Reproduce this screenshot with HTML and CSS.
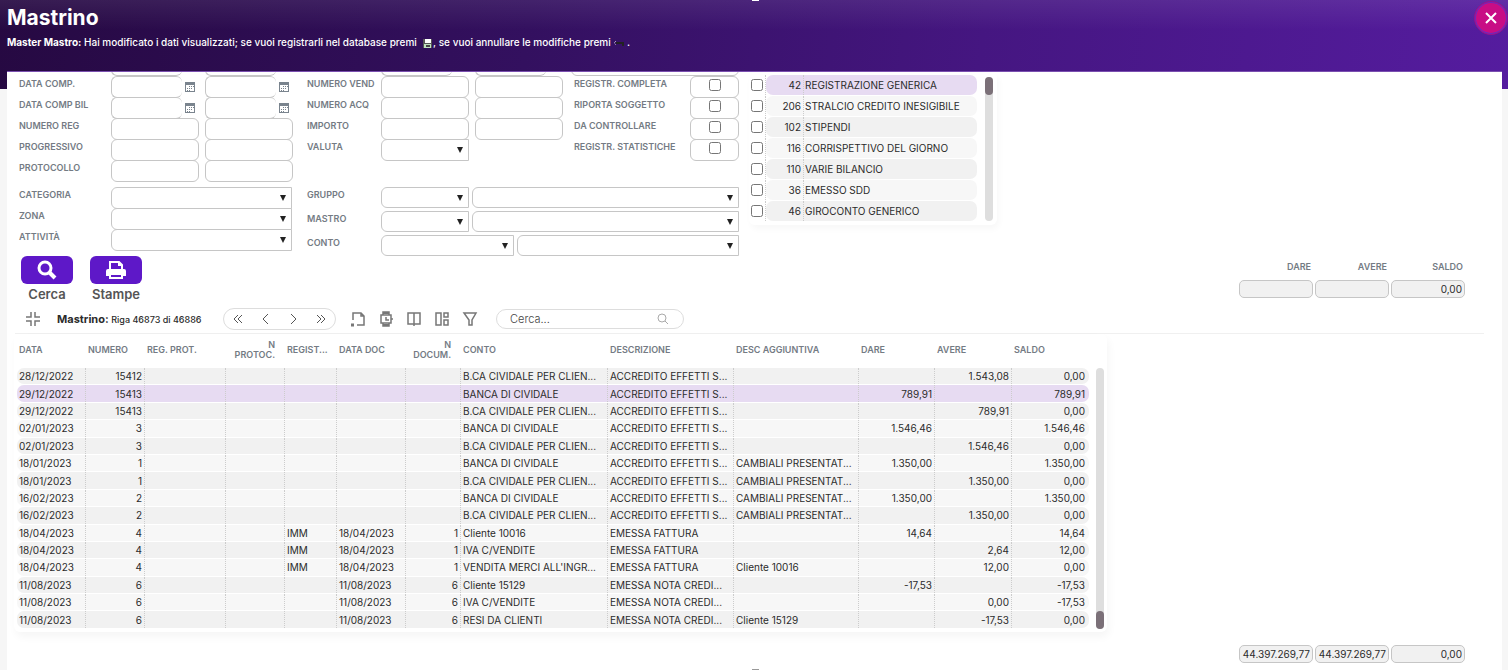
FILE: index.html
```html
<!DOCTYPE html>
<html lang="it">
<head>
    <meta charset="UTF-8">
    <meta name="viewport" content="width=device-width, initial-scale=1.0">
    <title>Mastrino</title>
    <link rel="stylesheet" href="styles.css">
</head>
<body>
    <svg class="sprite" aria-hidden="true">
        <symbol id="calendar" viewBox="0 0 12 12">
            <path fill="#7a848e" d="M1 1h10v10H1z"/>
            <path fill="#fff" d="M2 4h8v6H2z"/>
            <path fill="#7a848e" d="M5 5h1v1H5zM7 5h1v1H7zM9 5h1v1H9zM3 7h1v1H3zM5 7h1v1H5zM7 7h1v1H7zM3 9h1v1H3zM5 9h1v1H5z"/>
        </symbol>
    </svg>

    <span class="handle handle-top"></span>
    <span class="handle handle-bottom"></span>

    <header class="page-header">
        <div>
            <h1 class="page-title">Mastrino</h1>
            <p class="message"><b>Master Mastro:</b> Hai modificato i dati visualizzati; se vuoi registrarli nel database premi
                <svg class="inline-icon save-icon" viewBox="0 0 9 9"><path fill="#555" d="M0 0h9v9H0z"/><path fill="#fff" d="M2 0h6v4H2z"/><path fill="#bfe0bf" d="M1 5h7v4H1z"/><path fill="#444" d="M3 6h4v2H3z"/></svg>
                , se vuoi annullare le modifiche premi
                <svg class="inline-icon undo-icon" viewBox="0 0 11 9"><path fill="none" stroke="#222" stroke-width="2" d="M3 4h7v3"/><path fill="none" stroke="#ddd" stroke-dasharray="1 1" d="M3 2L1 4l2 2"/></svg>
                .</p>
        </div>
        <button type="button" class="close-btn" aria-label="Chiudi">
            <svg viewBox="0 0 12 12" width="12" height="12"><path d="M1 1l10 10M11 1L1 11" stroke="#fff" stroke-width="2"/></svg>
        </button>
    </header>

    <main class="panel">
        <div class="top">
            <form class="filters">
                <!-- bottom edge of the row that is scrolled out -->
                <div class="cut-row cut-dates"><i class="cut short"></i><i class="cut short"></i></div>
                <div class="cut-row cut-dates"><i class="cut short"></i><i class="cut short"></i></div>
                <div class="cut-row cut-wide"><i class="cut"></i></div>

                <div class="group">
                    <div class="field-row">
                        <label for="dataComp">DATA COMP.</label>
                        <span class="date"><input type="text" id="dataComp"><button type="button" aria-label="Calendario"><svg><use href="#calendar"/></svg></button></span>
                        <span class="date"><input type="text" aria-label="Data comp. a"><button type="button" aria-label="Calendario"><svg><use href="#calendar"/></svg></button></span>
                    </div>
                    <div class="field-row">
                        <label for="dataCompBil">DATA COMP BIL</label>
                        <span class="date"><input type="text" id="dataCompBil"><button type="button" aria-label="Calendario"><svg><use href="#calendar"/></svg></button></span>
                        <span class="date"><input type="text" aria-label="Data comp bil a"><button type="button" aria-label="Calendario"><svg><use href="#calendar"/></svg></button></span>
                    </div>
                    <div class="field-row">
                        <label for="numeroReg">NUMERO REG</label>
                        <input type="text" class="box" id="numeroReg">
                        <input type="text" class="box" aria-label="Numero reg a">
                    </div>
                    <div class="field-row">
                        <label for="progressivo">PROGRESSIVO</label>
                        <input type="text" class="box" id="progressivo">
                        <input type="text" class="box" aria-label="Progressivo a">
                    </div>
                    <div class="field-row">
                        <label for="protocollo">PROTOCOLLO</label>
                        <input type="text" class="box" id="protocollo">
                        <input type="text" class="box" aria-label="Protocollo a">
                    </div>
                </div>

                <div class="group group-middle">
                    <div class="field-row">
                        <label for="numeroVend">NUMERO VEND</label>
                        <input type="text" class="box" id="numeroVend">
                        <input type="text" class="box" aria-label="Numero vend a">
                    </div>
                    <div class="field-row">
                        <label for="numeroAcq">NUMERO ACQ</label>
                        <input type="text" class="box" id="numeroAcq">
                        <input type="text" class="box" aria-label="Numero acq a">
                    </div>
                    <div class="field-row">
                        <label for="importo">IMPORTO</label>
                        <input type="text" class="box" id="importo">
                        <input type="text" class="box" aria-label="Importo a">
                    </div>
                    <div class="field-row">
                        <label for="valuta">VALUTA</label>
                        <select class="box" id="valuta"><option></option></select>
                    </div>
                </div>

                <div class="group group-checks">
                    <div class="field-row">
                        <label for="completa">REGISTR. COMPLETA</label>
                        <span class="check-box"><input type="checkbox" id="completa"></span>
                    </div>
                    <div class="field-row">
                        <label for="riporta">RIPORTA SOGGETTO</label>
                        <span class="check-box"><input type="checkbox" id="riporta"></span>
                    </div>
                    <div class="field-row">
                        <label for="controllare">DA CONTROLLARE</label>
                        <span class="check-box"><input type="checkbox" id="controllare"></span>
                    </div>
                    <div class="field-row">
                        <label for="statistiche">REGISTR. STATISTICHE</label>
                        <span class="check-box"><input type="checkbox" id="statistiche"></span>
                    </div>
                </div>

                <div class="group">
                    <div class="field-row">
                        <label for="categoria">CATEGORIA</label>
                        <select class="fill" id="categoria"><option></option></select>
                    </div>
                    <div class="field-row">
                        <label for="zona">ZONA</label>
                        <select class="fill" id="zona"><option></option></select>
                    </div>
                    <div class="field-row">
                        <label for="attivita">ATTIVITÀ</label>
                        <select class="fill" id="attivita"><option></option></select>
                    </div>
                </div>

                <div class="group group-accounts">
                    <div class="field-row">
                        <label for="gruppo">GRUPPO</label>
                        <select class="box" id="gruppo"><option></option></select>
                        <select class="fill" aria-label="Descrizione gruppo"><option></option></select>
                    </div>
                    <div class="field-row">
                        <label for="mastro">MASTRO</label>
                        <select class="box" id="mastro"><option></option></select>
                        <select class="fill" aria-label="Descrizione mastro"><option></option></select>
                    </div>
                    <div class="field-row">
                        <label for="conto">CONTO</label>
                        <select class="box-wide" id="conto"><option></option></select>
                        <select class="fill" aria-label="Descrizione conto"><option></option></select>
                    </div>
                </div>
            </form>

            <div class="causali">
                <table class="causali-table">
                    <tbody>
                        <tr class="selected"><td><input type="checkbox" aria-label="Registrazione generica"></td><td class="num">42</td><td>REGISTRAZIONE GENERICA</td></tr>
                        <tr><td><input type="checkbox" aria-label="Stralcio credito inesigibile"></td><td class="num">206</td><td>STRALCIO CREDITO INESIGIBILE</td></tr>
                        <tr><td><input type="checkbox" aria-label="Stipendi"></td><td class="num">102</td><td>STIPENDI</td></tr>
                        <tr><td><input type="checkbox" aria-label="Corrispettivo del giorno"></td><td class="num">116</td><td>CORRISPETTIVO DEL GIORNO</td></tr>
                        <tr><td><input type="checkbox" aria-label="Varie bilancio"></td><td class="num">110</td><td>VARIE BILANCIO</td></tr>
                        <tr><td><input type="checkbox" aria-label="Emesso SDD"></td><td class="num">36</td><td>EMESSO SDD</td></tr>
                        <tr><td><input type="checkbox" aria-label="Giroconto generico"></td><td class="num">46</td><td>GIROCONTO GENERICO</td></tr>
                    </tbody>
                </table>
                <div class="scrollbar"><span class="thumb"></span></div>
            </div>
        </div>

        <div class="actions">
            <button type="button" class="action">
                <span class="action-icon"><svg viewBox="0 0 20 20" width="20" height="20" fill="none" stroke="#fff"><circle cx="8" cy="8" r="6" stroke-width="3"/><path d="M12 12l6 6" stroke-width="4"/></svg></span>
                Cerca
            </button>
            <button type="button" class="action">
                <span class="action-icon"><svg viewBox="0 0 20 20" width="20" height="20"><path fill="none" stroke="#fff" stroke-width="2" d="M4 10V2h9l3 3v5"/><path fill="#fff" d="M12 1v5h5z"/><path fill="#fff" d="M2 9h16a2 2 0 0 1 2 2v5h-4v-2H4v2H0v-5a2 2 0 0 1 2-2z"/><path fill="#5e18c8" stroke="#fff" stroke-width="2" d="M4 14h12v4H4z"/></svg></span>
                Stampe
            </button>
            <div class="totals">
                <label>DARE<input type="text" readonly></label>
                <label>AVERE<input type="text" readonly></label>
                <label>SALDO<input type="text" value="0,00" readonly></label>
            </div>
        </div>

        <div class="toolbar">
            <button type="button" class="tool collapse" aria-label="Comprimi"><svg viewBox="0 0 16 16"><path d="M6 1v5H1M10 1v5h5M6 15v-5H1M10 15v-5h5"/></svg></button>
            <h2 class="grid-title">Mastrino: <span>Riga 46873 di 46886</span></h2>
            <div class="pager">
                <button type="button" aria-label="Prima"><svg viewBox="0 0 12 12"><path d="M6 2L2 6l4 4M10 2L6 6l4 4"/></svg></button>
                <button type="button" aria-label="Precedente"><svg viewBox="0 0 12 12"><path d="M8 1L3 6l5 5"/></svg></button>
                <button type="button" aria-label="Successiva"><svg viewBox="0 0 12 12"><path d="M4 1l5 5-5 5"/></svg></button>
                <button type="button" aria-label="Ultima"><svg viewBox="0 0 12 12"><path d="M2 2l4 4-4 4M6 2l4 4-4 4"/></svg></button>
            </div>
            <div class="tools">
                <button type="button" class="tool" aria-label="Esporta"><svg viewBox="0 0 16 16"><path d="M3 9V2h8l3 3v9H7M11 2v3h3"/><path d="M1 14h3" stroke-width="3"/></svg></button>
                <button type="button" class="tool" aria-label="Storico"><svg viewBox="0 0 16 16"><path d="M5 4V1h6v3M5 12v3h6v-3M3 4h10v8H3zM13 8h2M8 6v3h3"/><path d="M5 2h6M5 14h6" stroke-width="2"/></svg></button>
                <button type="button" class="tool" aria-label="Dettaglio"><svg viewBox="0 0 16 16"><path d="M2 2h12v11H2zM8 2v13"/></svg></button>
                <button type="button" class="tool" aria-label="Layout"><svg viewBox="0 0 16 16"><path d="M2 2h5v12H2zM10 2h4v4h-4zM10 9h4v5h-4z"/></svg></button>
                <button type="button" class="tool" aria-label="Filtro"><svg viewBox="0 0 16 16"><path d="M2 2h12L10 9v5H7V9z"/></svg></button>
            </div>
            <div class="search">
                <input type="text" placeholder="Cerca..." aria-label="Cerca">
                <svg viewBox="0 0 12 12" width="12" height="12"><circle cx="5" cy="5" r="4"/><path d="M8 8l3 3"/></svg>
            </div>
        </div>

        <div class="grid-card">
            <table class="grid">
                <colgroup>
                    <col class="w69"><col class="w59"><col class="w81"><col class="w59"><col class="w52"><col class="w69"><col class="w55">
                    <col class="w147"><col class="w126"><col class="w125"><col class="w76"><col class="w77"><col class="w77">
                </colgroup>
                <thead>
                    <tr><th>DATA</th><th>NUMERO</th><th>REG. PROT.</th><th class="num">N PROTOC.</th><th>REGIST...</th><th>DATA DOC</th><th class="num">N DOCUM.</th><th>CONTO</th><th>DESCRIZIONE</th><th>DESC AGGIUNTIVA</th><th>DARE</th><th>AVERE</th><th>SALDO</th></tr>
                </thead>
                <tbody>
                    <tr><td>28/12/2022</td><td>15412</td><td></td><td></td><td></td><td></td><td></td><td>B.CA CIVIDALE PER CLIEN...</td><td>ACCREDITO EFFETTI S...</td><td></td><td></td><td>1.543,08</td><td>0,00</td></tr>
                    <tr class="selected"><td>29/12/2022</td><td>15413</td><td></td><td></td><td></td><td></td><td></td><td>BANCA DI CIVIDALE</td><td>ACCREDITO EFFETTI S...</td><td></td><td>789,91</td><td></td><td>789,91</td></tr>
                    <tr><td>29/12/2022</td><td>15413</td><td></td><td></td><td></td><td></td><td></td><td>B.CA CIVIDALE PER CLIEN...</td><td>ACCREDITO EFFETTI S...</td><td></td><td></td><td>789,91</td><td>0,00</td></tr>
                    <tr><td>02/01/2023</td><td>3</td><td></td><td></td><td></td><td></td><td></td><td>BANCA DI CIVIDALE</td><td>ACCREDITO EFFETTI S...</td><td></td><td>1.546,46</td><td></td><td>1.546,46</td></tr>
                    <tr><td>02/01/2023</td><td>3</td><td></td><td></td><td></td><td></td><td></td><td>B.CA CIVIDALE PER CLIEN...</td><td>ACCREDITO EFFETTI S...</td><td></td><td></td><td>1.546,46</td><td>0,00</td></tr>
                    <tr><td>18/01/2023</td><td>1</td><td></td><td></td><td></td><td></td><td></td><td>BANCA DI CIVIDALE</td><td>ACCREDITO EFFETTI S...</td><td>CAMBIALI PRESENTAT...</td><td>1.350,00</td><td></td><td>1.350,00</td></tr>
                    <tr><td>18/01/2023</td><td>1</td><td></td><td></td><td></td><td></td><td></td><td>B.CA CIVIDALE PER CLIEN...</td><td>ACCREDITO EFFETTI S...</td><td>CAMBIALI PRESENTAT...</td><td></td><td>1.350,00</td><td>0,00</td></tr>
                    <tr><td>16/02/2023</td><td>2</td><td></td><td></td><td></td><td></td><td></td><td>BANCA DI CIVIDALE</td><td>ACCREDITO EFFETTI S...</td><td>CAMBIALI PRESENTAT...</td><td>1.350,00</td><td></td><td>1.350,00</td></tr>
                    <tr><td>16/02/2023</td><td>2</td><td></td><td></td><td></td><td></td><td></td><td>B.CA CIVIDALE PER CLIEN...</td><td>ACCREDITO EFFETTI S...</td><td>CAMBIALI PRESENTAT...</td><td></td><td>1.350,00</td><td>0,00</td></tr>
                    <tr><td>18/04/2023</td><td>4</td><td></td><td></td><td>IMM</td><td>18/04/2023</td><td>1</td><td>Cliente 10016</td><td>EMESSA FATTURA</td><td></td><td>14,64</td><td></td><td>14,64</td></tr>
                    <tr><td>18/04/2023</td><td>4</td><td></td><td></td><td>IMM</td><td>18/04/2023</td><td>1</td><td>IVA C/VENDITE</td><td>EMESSA FATTURA</td><td></td><td></td><td>2,64</td><td>12,00</td></tr>
                    <tr><td>18/04/2023</td><td>4</td><td></td><td></td><td>IMM</td><td>18/04/2023</td><td>1</td><td>VENDITA MERCI ALL'INGR...</td><td>EMESSA FATTURA</td><td>Cliente 10016</td><td></td><td>12,00</td><td>0,00</td></tr>
                    <tr><td>11/08/2023</td><td>6</td><td></td><td></td><td></td><td>11/08/2023</td><td>6</td><td>Cliente 15129</td><td>EMESSA NOTA CREDI...</td><td></td><td>-17,53</td><td></td><td>-17,53</td></tr>
                    <tr><td>11/08/2023</td><td>6</td><td></td><td></td><td></td><td>11/08/2023</td><td>6</td><td>IVA C/VENDITE</td><td>EMESSA NOTA CREDI...</td><td></td><td></td><td>0,00</td><td>-17,53</td></tr>
                    <tr><td>11/08/2023</td><td>6</td><td></td><td></td><td></td><td>11/08/2023</td><td>6</td><td>RESI DA CLIENTI</td><td>EMESSA NOTA CREDI...</td><td>Cliente 15129</td><td></td><td>-17,53</td><td>0,00</td></tr>
                </tbody>
            </table>
            <div class="scrollbar grid-scrollbar"><span class="thumb"></span></div>
        </div>

        <div class="totals totals-bottom">
            <input type="text" value="44.397.269,77" aria-label="Totale dare" readonly>
            <input type="text" value="44.397.269,77" aria-label="Totale avere" readonly>
            <input type="text" value="0,00" aria-label="Totale saldo" readonly>
        </div>
    </main>
</body>
</html>
```
FILE: styles.css
```css
* {
    margin: 0;
    padding: 0;
    box-sizing: border-box;
}

body {
    font-family: Inter, Arial, sans-serif;
    font-size: 10px;
    color: #2b2b2b;
    background-color: #f6f6f6;
    background-image: linear-gradient(rgba(255, 255, 255, 0.08), rgba(255, 255, 255, 0) 30px), linear-gradient(97deg, #260942, #33105f 35%, #451681 65%, #551c9f);
    background-size: 100% 89px;
    background-repeat: no-repeat;
    min-height: 100vh;
    display: flex;
    flex-direction: column;
}

button {
    font-family: inherit;
    background: none;
    border: none;
    cursor: pointer;
}

.sprite {
    position: absolute;
    width: 0;
    height: 0;
}

/* Window resize handles */
.handle {
    position: absolute;
    left: 50%;
    width: 7px;
    height: 1px;
    margin-left: -2px;
    background: #fff;
}

.handle-bottom {
    bottom: 0;
    background: #999;
}

/* Header */
.page-header {
    height: 71px;
    padding-left: 7px;
    display: flex;
    justify-content: space-between;
    align-items: flex-start;
    color: #fff;
}

.page-title {
    font-size: 21px;
    line-height: 24px;
    font-weight: 700;
    padding-top: 6px;
}

.message {
    font-weight: 500;
    line-height: 14px;
    padding-top: 5px;
}

.inline-icon {
    height: 9px;
    vertical-align: -2px;
}

.save-icon {
    width: 9px;
    margin: 0 -2px 0 4px;
}

.undo-icon {
    width: 11px;
}

.close-btn {
    width: 34px;
    height: 34px;
    margin-top: 1px;
    display: flex;
    justify-content: center;
    align-items: center;
    border-radius: 50%;
    background: #c80d85;
    border: 1px solid #93148f;
    box-shadow: inset 0 0 0 1px #6a2bc0;
}

/* Main panel */
.panel {
    flex: 1;
    margin: 0 6px 0 7px;
    background: #fff;
    border-top: 1px solid #7a4fb0;
}

.top {
    display: flex;
    align-items: flex-start;
    gap: 10px;
    padding-left: 12px;
}

.filters {
    display: grid;
    grid-template-columns: 277px 256px 165px;
    column-gap: 11px;
}

.cut-row {
    height: 4px;
    overflow: hidden;
    display: flex;
    align-items: flex-end;
    gap: 6px;
    padding-left: 92px;
}

.cut-row + .cut-row {
    padding-left: 74px;
}

.cut-row.cut-wide {
    padding-left: 0;
    margin-left: -3px;
}

.cut {
    flex: 1;
    height: 22px;
    border: 1px solid #c6c6c6;
    border-radius: 6px;
}

.cut.short {
    flex: none;
    width: 71px;
    border-right: none;
    margin-right: 17px;
}

.group {
    margin-bottom: 5px;
}

.field-row {
    display: flex;
    align-items: flex-start;
    gap: 6px;
    margin-bottom: -1px;
}

.field-row:last-child {
    margin-bottom: 0;
}

label {
    font-size: 9px;
    line-height: 15px;
    font-weight: 600;
    color: #747b84;
    white-space: nowrap;
}

.field-row label {
    width: 86px;
}

.group-middle label,
.group-accounts label {
    width: 68px;
}

.field-row input[type="text"],
.field-row select,
.check-box {
    height: 22px;
    border: 1px solid #c6c6c6;
    border-radius: 6px;
    background-color: #fff;
    font: inherit;
}

.field-row .box {
    width: 88px;
}

.box-wide {
    width: 133px;
}

.fill {
    flex: 1;
    min-width: 0;
}

.group .field-row:has(.fill) {
    padding-right: 4px;
}

.group-accounts .field-row.field-row {
    padding-right: 0;
}

.field-row select {
    appearance: none;
    border-radius: 6px 0 0 6px;
    background: #fff url("data:image/svg+xml,%3Csvg xmlns='http://www.w3.org/2000/svg' width='6' height='6'%3E%3Cpath d='M0 0h6L3 6z' fill='%23222'/%3E%3C/svg%3E") no-repeat right 5px center;
}

.date {
    display: flex;
    width: 88px;
}

.date input {
    width: 71px;
    border-right: none !important;
}

.date button {
    width: 17px;
    height: 22px;
    padding-right: 2px;
    display: flex;
    justify-content: center;
    align-items: center;
}

.date svg {
    display: block;
    flex: none;
    width: 12px;
    height: 12px;
}

.group-checks .field-row {
    justify-content: space-between;
}

.check-box {
    width: 49px;
    display: flex;
    justify-content: center;
    padding-top: 2px;
}

input[type="checkbox"] {
    width: 12px;
    height: 12px;
}

.group-accounts {
    grid-column: span 2;
    margin-bottom: 0;
}

.group-accounts .field-row {
    gap: 3px;
    margin-bottom: 3px;
}

.group-accounts .field-row:last-child {
    margin-bottom: 0;
}

.group-accounts .field-row select {
    height: 21px;
}

.group-accounts label {
    width: 71px;
}

/* Causali list */
.causali {
    display: flex;
    gap: 8px;
    padding: 3px 4px 3px 0;
    border-radius: 6px;
    box-shadow: 2px 4px 6px rgba(0, 0, 0, 0.03);
}

.causali-table {
    border-spacing: 0 1px;
    margin-top: -1px;
}

.causali-table td {
    height: 20px;
    line-height: 20px;
    white-space: nowrap;
    padding-left: 1px;
    background: #f1f1f1;
}

.causali-table tr:nth-child(even) td {
    background: #f7f7f7;
}

.causali-table tr td:first-child {
    width: 17px;
    padding-left: 2px;
    background: none;
    border-right: 1px dotted #ccc;
}

.causali-table input {
    display: block;
}

.causali-table .num {
    width: 38px;
    padding-right: 2px;
    text-align: right;
    border-right: 1px dotted #ccc;
    border-radius: 7px 0 0 7px;
}

.causali-table td:last-child {
    width: 173px;
    border-radius: 0 7px 7px 0;
}

.causali-table tr.selected td:not(:first-child) {
    background: #e7dbf2;
}

.scrollbar {
    width: 8px;
    margin: 2px 0 1px;
    border-radius: 4px;
    background: #dedede;
    display: flex;
    align-items: flex-start;
}

.thumb {
    width: 8px;
    height: 18px;
    border-radius: 4px;
    background: #7b7078;
}

/* Action buttons and totals */
.actions {
    display: flex;
    gap: 17px;
    padding: 0 37px 0 14px;
}

.action {
    width: 52px;
    display: flex;
    flex-direction: column;
    align-items: center;
    font-size: 13px;
    line-height: 20px;
    font-weight: 600;
    color: #555;
}

.action-icon {
    width: 52px;
    height: 28px;
    border-radius: 6px;
    background: #5e18c8;
    display: flex;
    justify-content: center;
    align-items: center;
}

.totals {
    display: flex;
    gap: 2px;
    margin-left: auto;
    padding-top: 3px;
}

.totals label {
    width: 74px;
    padding-right: 2px;
    text-align: right;
}

.totals input {
    width: 74px;
    height: 18px;
    padding: 0 2px;
    border: 1px solid #c6c6c6;
    border-radius: 5px;
    background: #f1f1f1;
    font: 10px Inter, Arial, sans-serif;
    color: #2b2b2b;
    text-align: right;
}

.totals label input {
    display: block;
    margin-top: 6px;
}

.totals-bottom {
    justify-content: flex-end;
    padding: 13px 37px 7px 0;
}

/* Toolbar */
.toolbar {
    display: flex;
    align-items: center;
    height: 29px;
    margin: 1px 18px 0 8px;
    padding-left: 10px;
    border-bottom: 1px solid #f0f0f0;
}

.toolbar svg {
    display: block;
    fill: none;
    stroke: #777;
}

.tool svg {
    width: 16px;
    height: 16px;
    stroke-width: 1.5;
}

.grid-title {
    font-size: 11px;
    line-height: 16px;
    font-weight: 700;
    margin-left: 16px;
    width: 166px;
    white-space: nowrap;
}

.grid-title span {
    font-size: 9px;
    font-weight: 500;
}

.pager {
    display: flex;
    justify-content: space-around;
    width: 113px;
    height: 22px;
    border: 1px solid #ddd;
    border-radius: 11px;
}

.pager svg {
    width: 12px;
    height: 12px;
    stroke: #555;
}

.tools {
    display: flex;
    gap: 12px;
    margin-left: 14px;
}

.search {
    display: flex;
    align-items: center;
    width: 188px;
    height: 20px;
    margin-left: 18px;
    padding: 0 14px 0 13px;
    border: 1px solid #ddd;
    border-radius: 10px;
}

.search input {
    flex: 1;
    min-width: 0;
    border: none;
    outline: none;
    font: 300 11px Inter, Arial, sans-serif;
}

.search input::placeholder {
    color: #444;
}

.search svg {
    stroke: #aaa;
}

/* Ledger grid */
.grid-card {
    display: flex;
    gap: 7px;
    width: fit-content;
    margin-left: 7px;
    padding: 0 3px 3px;
    border-radius: 6px;
    box-shadow: 2px 5px 8px rgba(0, 0, 0, 0.04);
}

.grid {
    width: 1072px;
    height: 295px;
    table-layout: fixed;
    border-spacing: 0 1px;
}

.w52 { width: 52px; }
.w55 { width: 55px; }
.w59 { width: 59px; }
.w69 { width: 69px; }
.w76 { width: 76px; }
.w77 { width: 77px; }
.w81 { width: 81px; }
.w125 { width: 125px; }
.w126 { width: 126px; }
.w147 { width: 147px; }

.grid th {
    height: 32px;
    padding: 0 0 2px 2px;
    font-size: 9px;
    line-height: 10px;
    font-weight: 600;
    color: #747b84;
    text-align: left;
}

.grid th.num {
    padding-right: 10px;
    text-align: right;
}

.grid td {
    padding: 0 0 0 2px;
    line-height: 14px;
    white-space: nowrap;
    background: #f1f1f1;
    border-right: 1px dotted #ccc;
}

.grid tbody tr:nth-child(even) td {
    background: #f7f7f7;
}

.grid tbody tr.selected td {
    background: #e7dbf2;
}

.grid td:first-child {
    border-radius: 7px 0 0 7px;
}

.grid td:nth-child(2),
.grid td:nth-child(7),
.grid td:nth-child(n + 11) {
    padding-right: 2px;
    text-align: right;
}

.grid td:last-child {
    padding-right: 4px;
    border-right: none;
    border-radius: 0 7px 7px 0;
}

.grid-scrollbar {
    margin: 34px 0 0;
    align-items: flex-end;
}
```
